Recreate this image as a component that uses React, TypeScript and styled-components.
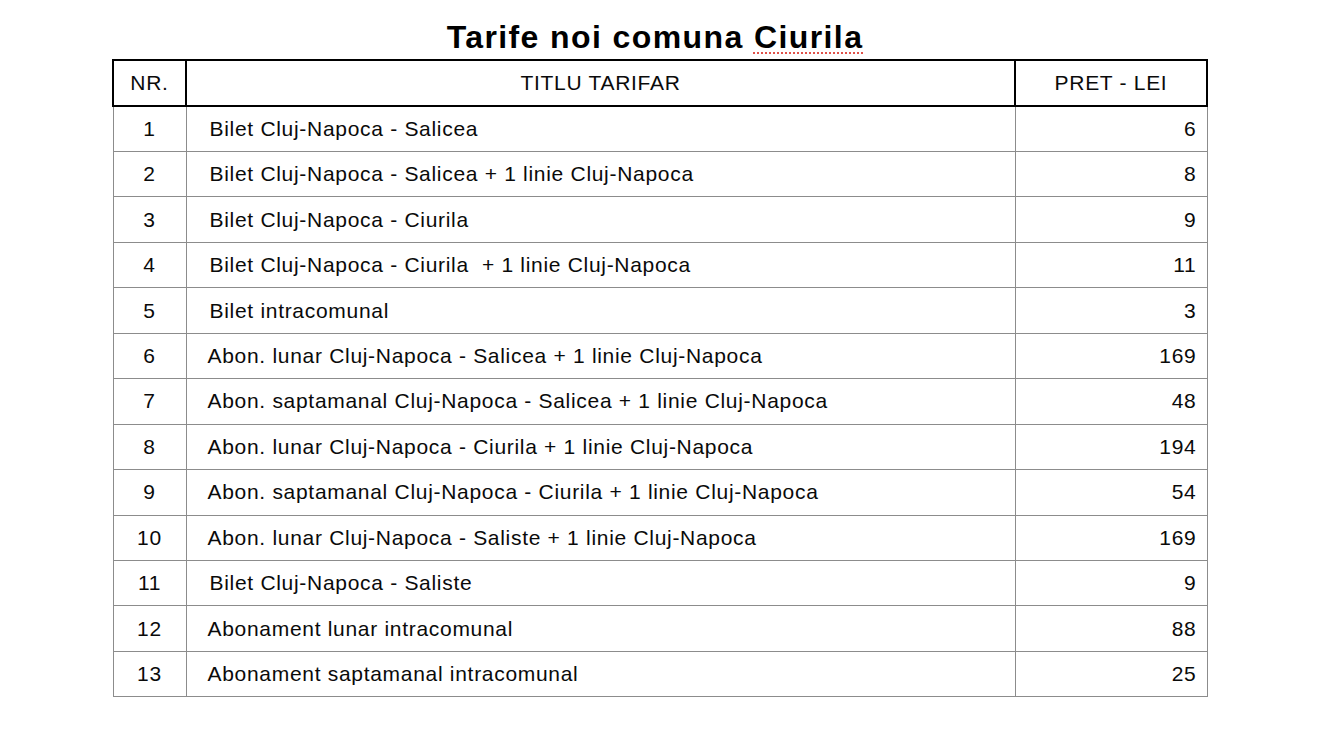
import React from "react";
import styled, { createGlobalStyle } from "styled-components";

const Global = createGlobalStyle`
  html, body { margin: 0; padding: 0; background: #ffffff; }
  body { font-family: "Liberation Sans", Arial, sans-serif; color: #000; }
`;

const Page = styled.div`
  width: 1317px;
  height: 741px;
  background: #fff;
  display: flex;
  flex-direction: column;
  align-items: flex-start;
  padding-left: 112px;
  box-sizing: border-box;
`;

const Title = styled.h1`
  margin: 0;
  padding-top: 19px;
  width: 1086px;
  height: 40px;
  text-align: center;
  font-family: "Liberation Sans", Arial, sans-serif;
  font-weight: 700;
  font-size: 32px;
  letter-spacing: 1.4px;
  line-height: 36px;
  color: #000;
`;

const Squiggle = styled.span`
  text-decoration-line: underline;
  text-decoration-style: dotted;
  text-decoration-color: #e0524a;
  text-decoration-thickness: 2px;
  text-underline-offset: 4px;
`;

const Table = styled.table`
  border-collapse: collapse;
  table-layout: fixed;
  width: 1094px;
  font-family: "Liberation Sans", Arial, sans-serif;
  font-size: 21px;
  letter-spacing: 0.7px;
  color: #0a0a0a;
`;

const Col = styled.col<{ $w: number }>`
  width: ${(p) => p.$w}px;
`;

const HeadCell = styled.th`
  height: 44px;
  border: 2px solid #000;
  font-weight: 400;
  text-align: center;
  vertical-align: middle;
  padding: 0;
`;

const Row = styled.tr`
  height: 45.46px;
`;

const NumCell = styled.td`
  border: 1px solid #8c8c8c;
  text-align: center;
  vertical-align: middle;
  padding: 0;
`;

const TitleCell = styled.td<{ $indent: number }>`
  border: 1px solid #8c8c8c;
  text-align: left;
  vertical-align: middle;
  padding: 0 0 0 ${(p) => p.$indent}px;
  white-space: pre;
`;

const PriceCell = styled.td`
  border: 1px solid #8c8c8c;
  text-align: right;
  vertical-align: middle;
  padding: 0 10px 0 0;
`;

const rows: [string, string, number, number][] = [
  ["1", "Bilet Cluj-Napoca - Salicea", 6, 23],
  ["2", "Bilet Cluj-Napoca - Salicea + 1 linie Cluj-Napoca", 8, 23],
  ["3", "Bilet Cluj-Napoca - Ciurila", 9, 23],
  ["4", "Bilet Cluj-Napoca - Ciurila  + 1 linie Cluj-Napoca", 11, 23],
  ["5", "Bilet intracomunal", 3, 23],
  ["6", "Abon. lunar Cluj-Napoca - Salicea + 1 linie Cluj-Napoca", 169, 21],
  ["7", "Abon. saptamanal Cluj-Napoca - Salicea + 1 linie Cluj-Napoca", 48, 21],
  ["8", "Abon. lunar Cluj-Napoca - Ciurila + 1 linie Cluj-Napoca", 194, 21],
  ["9", "Abon. saptamanal Cluj-Napoca - Ciurila + 1 linie Cluj-Napoca", 54, 21],
  ["10", "Abon. lunar Cluj-Napoca - Saliste + 1 linie Cluj-Napoca", 169, 21],
  ["11", "Bilet Cluj-Napoca - Saliste", 9, 23],
  ["12", "Abonament lunar intracomunal", 88, 21],
  ["13", "Abonament saptamanal intracomunal", 25, 21],
];

export default function App() {
  return (
    <>
      <Global />
      <Page>
        <Title>
          Tarife noi comuna <Squiggle>Ciurila</Squiggle>
        </Title>
        <Table>
          <colgroup>
            <Col $w={73} />
            <Col $w={829} />
            <Col $w={192} />
          </colgroup>
          <thead>
            <tr>
              <HeadCell>NR.</HeadCell>
              <HeadCell>TITLU TARIFAR</HeadCell>
              <HeadCell>PRET - LEI</HeadCell>
            </tr>
          </thead>
          <tbody>
            {rows.map(([n, t, p, ind]) => (
              <Row key={n}>
                <NumCell>{n}</NumCell>
                <TitleCell $indent={ind}>{t}</TitleCell>
                <PriceCell>{p}</PriceCell>
              </Row>
            ))}
          </tbody>
        </Table>
      </Page>
    </>
  );
}
